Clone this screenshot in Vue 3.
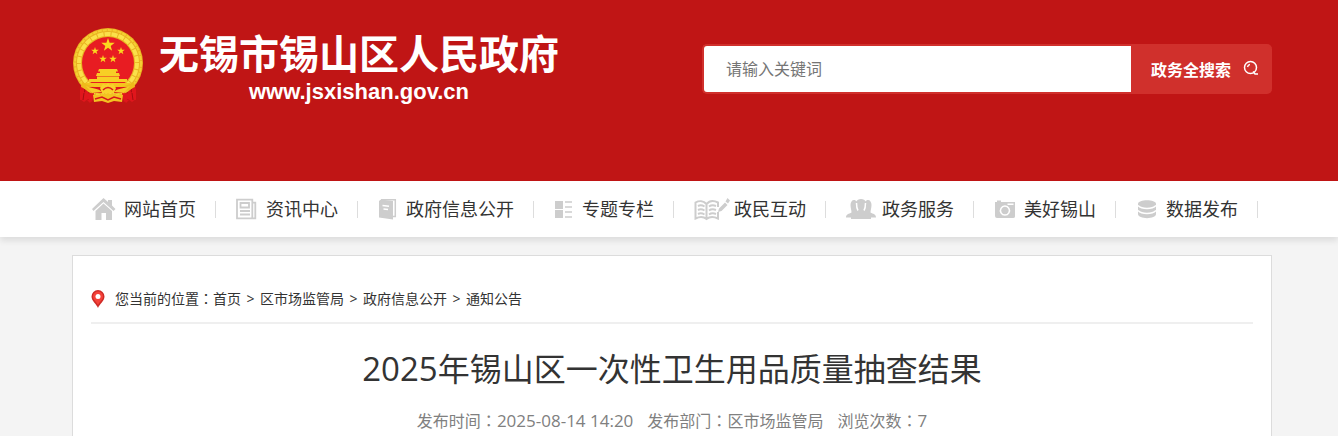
<template>
  <div class="page">
    <header class="header">
      <div class="container header-inner">
        <a class="logo" href="#">
          <svg class="emblem" viewBox="0 0 70 76" aria-hidden="true">
            <!-- red drapes -->
            <path d="M8 52 L7 72 L13 71 L17 75 L21 69 H49 L53 75 L57 71 L63 72 L62 52Z" fill="#e0161c" />
            <path d="M12 60 L11 70 M16 64 L15 72 M58 60 L59 70 M54 64 L55 72" stroke="#a50d10" fill="none" />
            <!-- wheat ring -->
            <circle cx="35" cy="35" r="35" fill="#e9b322" />
            <circle cx="35" cy="35" r="33" fill="none" stroke="#f5cf33" stroke-width="2" stroke-dasharray="4 1" />
            <circle cx="35" cy="35" r="29" fill="none" stroke="#fbe04a" stroke-width="4" stroke-dasharray="6 1" />
            <circle cx="35" cy="35" r="26" fill="#e81c22" />
            <polygon v-for="star in stars" :key="star" :points="star" fill="#fbd81f" />
            <!-- gate tower -->
            <path d="M26 41 H44 L45 43.500 H25Z M27 43 H43 V45 H46 L47 48 H23 L24 45 H27Z M24 48.500 H46 V51 H54 V54 H16 V51 H24Z" fill="#f7cf25" />
            <path d="M12 55 H58 L55 59 H15Z" fill="#f5c51e" />
            <!-- ribbons and gear -->
            <path d="M9 54 C16 58 23 58 28 63 C20 66 14 62 8 59Z M61 54 C54 58 47 58 42 63 C50 66 56 62 62 59Z" fill="#eeb91b" />
            <path d="M15 59 H55 L51 65 H19Z" fill="#dd171b" />
            <path d="M13 58 C21 61 25 60 29 64 L19 65Z M57 58 C49 61 45 60 41 64 L51 65Z" fill="#f6cc28" />
            <path d="M27 60 L30 56 L33 57 L35 55 L37 57 L40 56 L43 60 L41 65 H29Z" fill="#f8d12b" />
            <path d="M30 62 Q35 57 40 62" fill="none" stroke="#dd171b" stroke-width="1.500" />
            <path d="M7 60 C10 65 15 66 21 65 L19 74 L15 71 L11 74 L7 71Z M63 60 C60 65 55 66 49 65 L51 74 L55 71 L59 74 L63 71Z" fill="#e0161c" />
            <path d="M11 65 L10 72 M59 65 L60 72" stroke="#a50d10" fill="none" />
            <path d="M20 67 H28 L35 65 L42 67 H50 L49 74 L41 73 L35 75 L29 73 L21 74Z" fill="#f3c221" />
            <path d="M22 71 L29 69 L35 72 L41 69 L48 71" fill="none" stroke="#d8161b" stroke-width="1.500" />
          </svg>
          <span class="logo-text">
            <span class="site-name">无锡市锡山区人民政府</span>
            <span class="site-url">www.jsxishan.gov.cn</span>
          </span>
        </a>
        <form class="search" @submit.prevent>
          <input v-model="keyword" type="text" placeholder="请输入关键词" aria-label="请输入关键词" />
          <button type="submit">
            政务全搜索
            <svg viewBox="0 0 16 16" width="16" height="16" aria-hidden="true">
              <circle cx="7.500" cy="7.500" r="6" />
              <path d="M4.500 7 Q5 4.700 7 4.500 M10 11.500 L12 14 H15" />
            </svg>
          </button>
        </form>
      </div>
    </header>

    <nav class="nav">
      <ul class="container nav-list">
        <li v-for="item in navItems" :key="item.label">
          <a href="#">
            <svg :width="item.width" height="24" :viewBox="`0 0 ${item.width} 24`" aria-hidden="true">
              <path v-if="item.fill" :d="item.fill" fill="#cdcdcd" />
              <path v-if="item.line" :d="item.line" fill="none" stroke="#cdcdcd" :stroke-width="item.stroke || 1.5" />
              <path v-if="item.cut" :d="item.cut" fill="none" stroke="#fff" stroke-width="1.500" />
            </svg>
            <span>{{ item.label }}</span>
          </a>
        </li>
      </ul>
    </nav>

    <main class="main">
      <article class="container content">
        <div class="crumbs">
          <svg class="pin" viewBox="0 0 14 18" width="14" height="18" aria-hidden="true">
            <path d="M7 18 C5.500 14 .5 11 .5 6.500 A6.500 6.500 0 0 1 13.500 6.500 C13.500 11 8.500 14 7 18Z" fill="#cf2b27" />
            <path d="M7 15 C6 12 2 10 2 6.500 A5 5 0 0 1 12 6.500 C12 10 8 12 7 15Z" fill="#f5423a" />
            <circle cx="7" cy="6.500" r="2.500" fill="#fff" />
          </svg>
          <span>您当前的位置<span class="colon">：</span></span>
          <template v-for="(crumb, i) in crumbs" :key="crumb">
            <span v-if="i" class="sep">&gt;</span>
            <a href="#">{{ crumb }}</a>
          </template>
        </div>
        <h1 class="title"><span class="num">2025</span>年锡山区一次性卫生用品质量抽查结果</h1>
        <div class="meta">
          <span>发布时间<span class="colon">：</span><span class="num">2025-08-14 14:20</span></span>
          <span>发布部门<span class="colon">：</span>区市场监管局</span>
          <span>浏览次数<span class="colon">：</span><span class="num">7</span></span>
        </div>
      </article>
    </main>
  </div>
</template>

<script setup>
import { ref } from 'vue'

const keyword = ref('')

const crumbs = ['首页', '区市场监管局', '政府信息公开', '通知公告']

// five pointed star as polygon points
function star(cx, cy, r) {
  const points = []
  for (let i = 0; i < 10; i++) {
    const radius = i % 2 ? r * 0.4 : r
    const angle = (i * Math.PI) / 5 - Math.PI / 2
    points.push(`${(cx + radius * Math.cos(angle)).toFixed(1)},${(cy + radius * Math.sin(angle)).toFixed(1)}`)
  }
  return points.join(' ')
}

const stars = [star(35, 17, 7), star(22, 23, 4), star(48, 23, 4), star(30, 31, 4), star(40, 31, 4)]

const navItems = [
  {
    label: '网站首页',
    width: 32,
    fill: 'M11.500 1 L16 5 V3 H20 V8.500 L23.500 12 L21.500 14 L11.500 5 L1.500 14 L0 12Z M11.500 6.500 L20 14 V23 H14 V16 H9.500 V23 H3.500 V14Z'
  },
  {
    label: '资讯中心',
    width: 30,
    line: 'M1 2.700 H16.300 V21.300 H1Z M16 5.700 H19.300 V21.300 H15 M4.500 6 H13 V10.500 H4.500Z M4 14 H14 M4 17.500 H14',
    stroke: 1.8
  },
  {
    label: '政府信息公开',
    width: 28,
    fill: 'M1 4 L3 2.500 L15 4 V22.500 L1 20.500Z',
    line: 'M3 2.700 H17.300 V19.500 H15',
    cut: 'M4.500 8.500 L11 9.300 M5.500 12 L10 12.500'
  },
  {
    label: '专题专栏',
    width: 28,
    fill: 'M1 4 H9 V12 H1Z M1 13 H9 V21 H1Z',
    line: 'M11 5 H18 M11 10 H18 M11 15 H18 M11 20 H18'
  },
  {
    label: '政民互动',
    width: 40,
    fill: 'M24 15 L25 11.500 L31 5.500 L33.500 8 L27.500 14Z M31.500 4.500 L33.500 1 L36 3.500 L34 6.500Z',
    line: 'M12.500 7 C9.500 3.500 5 3.500 1.500 5.500 V21.500 C5.500 19.500 9.500 19.500 12.500 22 C15.500 19.500 20 19.500 24 21.500 V15 M12.500 7 V21 M12.500 7 C15.500 3.500 20 3.500 24 5.500 V10 M4 9 Q7 7.500 10.500 9.500 M4 13 Q7 11.500 10.500 13.500 M4 17 Q7 15.500 10.500 17.500 M15 9.500 Q18 7.500 22 9 M15 13.500 Q18 11.500 22 13 M15 17.500 Q18 15.500 22 17',
    stroke: 2
  },
  {
    label: '政务服务',
    width: 36,
    fill: 'M0 20.500 C0 17 3 17 5.500 15.500 C5.500 13 4.500 11 4.500 8 C4.500 5 6 3 8 3 C9 3 10 3.500 10.500 4.500 C11 3 12.500 2 15 2 C17.500 2 19 3 19.500 4.500 C20 3.500 21 3 22 3 C24 3 25.500 5 25.500 8 C25.500 11 24.500 13 24.500 15.500 C27 17 30 17 30 20.500 H25 V22 H5 V20.500Z',
    cut: 'M10.500 6 Q10.500 11 12 13.500 M19.500 6 Q19.500 11 18 13.500'
  },
  {
    label: '美好锡山',
    width: 30,
    fill: 'M1 5 H3 V3.500 H7 V5 H21 V19.500 Q21 21 19 21 H3 Q1 21 1 19Z',
    cut: 'M11 9 A4.500 4.500 0 1 1 10.900 9Z M13.500 7.200 H19.500'
  },
  {
    label: '数据发布',
    width: 30,
    fill: 'M2 7 C2 2 20 2 20 7 V17 C20 22.500 2 22.500 2 17Z',
    cut: 'M2 8.500 Q5 11.500 11 11.500 T20 8.500 M2 13.500 Q5 16.500 11 16.500 T20 13.500'
  }
]
</script>

<style>
body {
  margin: 0;
}
</style>

<style scoped>
.page {
  display: flex;
  flex-direction: column;
  min-height: 100vh;
  background: #f4f4f4;
  color: #333;
  font-family: "Open Sans", "Noto Sans CJK SC", sans-serif;
}
a {
  color: inherit;
  text-decoration: none;
}
.container {
  box-sizing: border-box;
  width: 100%;
  max-width: 1200px;
  margin: 0 auto;
}
.header,
.nav,
.main {
  padding-left: 6px;
}
.header {
  background: #c01515;
}
.header-inner {
  display: flex;
  justify-content: space-between;
  align-items: flex-start;
  padding: 28px 0 77px;
}
.logo {
  display: flex;
  gap: 16px;
  color: #fff;
}
.emblem {
  width: 70px;
  height: 76px;
  margin-left: 1px;
}
.logo-text {
  display: flex;
  flex-direction: column;
  gap: 4px;
  text-align: center;
  font-weight: bold;
}
.site-name {
  font-family: "Noto Sans CJK SC", sans-serif;
  font-size: 40px;
  line-height: 48px;
}
.site-url {
  font-family: "Liberation Sans", sans-serif;
  font-size: 22px;
  line-height: 24px;
}
.search {
  display: flex;
  box-sizing: border-box;
  width: 570px;
  height: 50px;
  margin-top: 16px;
  border: 2px solid #d0302c;
  border-right: 0;
  border-radius: 5px;
  background: #d0302c;
}
.search input {
  flex: 1;
  min-width: 0;
  padding: 0 22px;
  border: 0;
  border-radius: 3px 0 0 3px;
  outline: none;
  background: #fff;
  font: 16px "Open Sans", "Noto Sans CJK SC", sans-serif;
}
.search input::placeholder {
  color: #757575;
}
.search button {
  display: flex;
  align-items: center;
  gap: 12px;
  width: 141px;
  padding: 0 0 0 20px;
  border: 0;
  background: none;
  color: #fff;
  font: bold 16px "Open Sans", "Noto Sans CJK SC", sans-serif;
  cursor: pointer;
}
.search svg {
  margin-bottom: 2px;
  fill: none;
  stroke: #fff;
  stroke-width: 1.5;
}
.nav {
  background: #fff;
  box-shadow: 0 4px 6px rgba(0, 0, 0, 0.09);
}
.nav-list {
  display: flex;
  padding: 0;
  list-style: none;
}
.nav-list li {
  display: flex;
  align-items: center;
  height: 56px;
}
.nav-list a {
  display: flex;
  align-items: center;
  padding: 0 19px 0 20px;
  font-size: 18px;
  line-height: 24px;
  white-space: nowrap;
}
.nav-list li::after {
  content: "";
  width: 1px;
  height: 17px;
  background: #ddd;
}
.main {
  display: flex;
  flex: 1;
  padding-top: 18px;
}
.content {
  padding: 0 18px;
  border: 1px solid #dcdcdc;
  border-bottom: 0;
  background: #fff;
}
.crumbs {
  display: flex;
  padding: 32px 0 12px;
  border-bottom: 2px solid #efefef;
  font-size: 14px;
  line-height: 22px;
}
.pin {
  margin: 2px 10px 0 0;
}
.sep {
  width: 9px;
  padding: 0 5px;
  text-align: center;
}
.colon {
  font-family: "Noto Sans CJK TC", sans-serif;
  line-height: 1;
}
.title {
  margin: 21px 0 0;
  font-size: 32px;
  font-weight: normal;
  line-height: 48px;
  text-align: center;
}
.title .num {
  font-size: 33px;
}
.meta {
  display: flex;
  justify-content: center;
  gap: 14px;
  margin-top: 16px;
  color: #808080;
  font-size: 16px;
  line-height: 24px;
}
.meta .num {
  font-size: 17px;
  line-height: 1;
}
</style>
